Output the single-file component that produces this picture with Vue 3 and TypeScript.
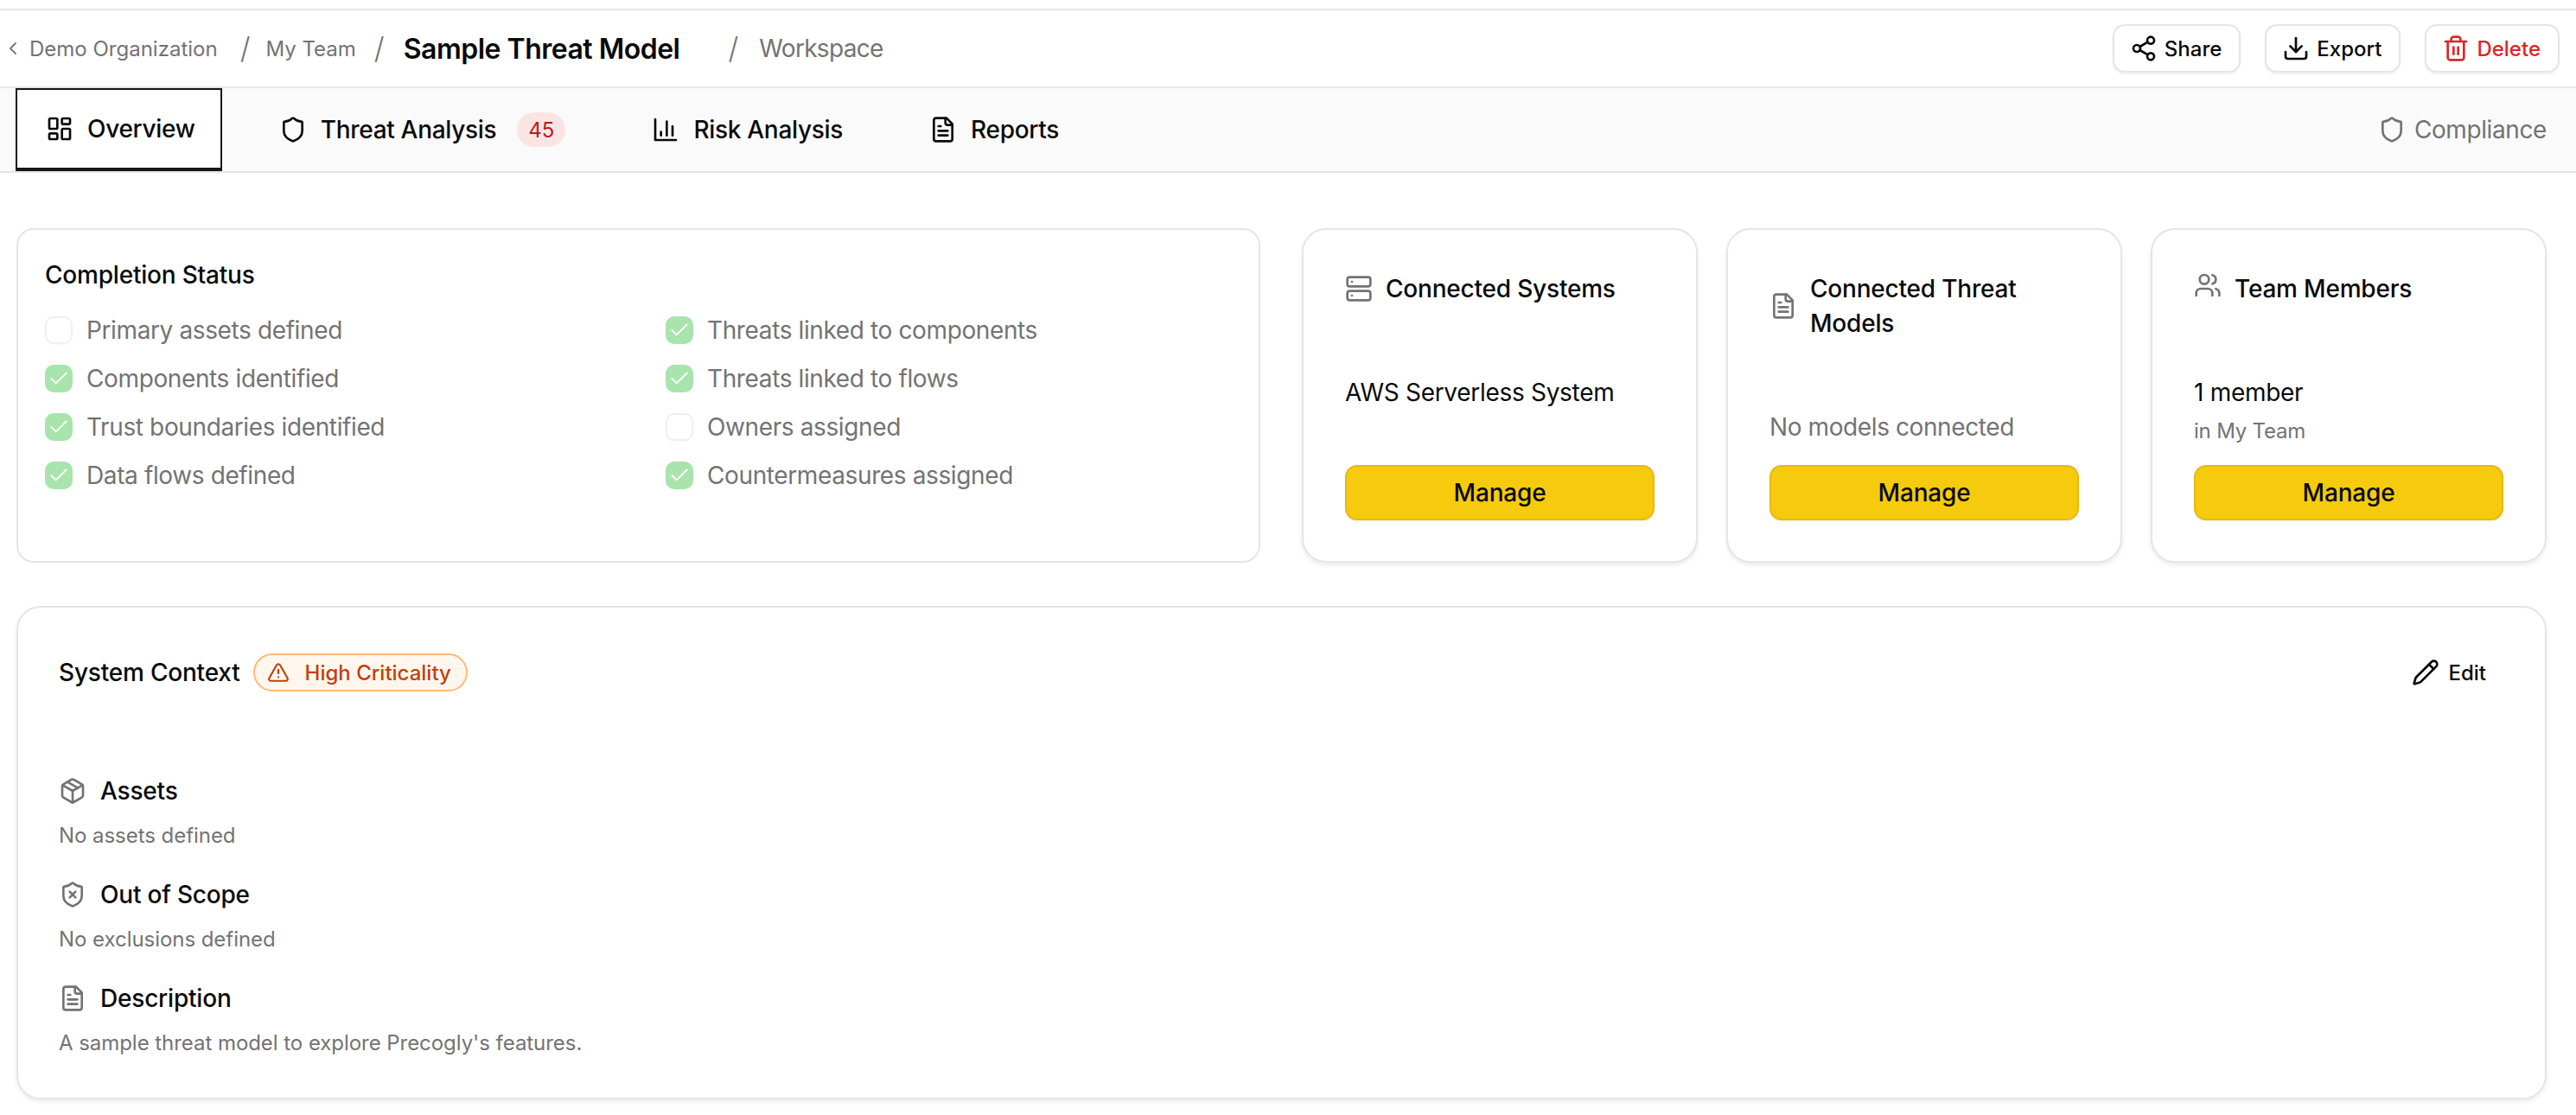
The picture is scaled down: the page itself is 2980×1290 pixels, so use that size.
<script setup lang="ts">
const checks: { label: string; done: boolean }[] = [
  { label: 'Primary assets defined', done: false },
  { label: 'Threats linked to components', done: true },
  { label: 'Components identified', done: true },
  { label: 'Threats linked to flows', done: true },
  { label: 'Trust boundaries identified', done: true },
  { label: 'Owners assigned', done: false },
  { label: 'Data flows defined', done: true },
  { label: 'Countermeasures assigned', done: true },
]
</script>

<template>
  <div class="page">
    <header class="topbar">
      <nav class="crumbs">
        <svg class="chev" viewBox="0 0 24 24"><path d="m15 18-6-6 6-6" /></svg>
        <span class="crumb c-org">Demo Organization</span>
        <span class="slash s1">/</span>
        <span class="crumb c-team">My Team</span>
        <span class="slash s2">/</span>
        <span class="title">Sample Threat Model</span>
        <span class="slash s3">/</span>
        <span class="workspace">Workspace</span>
      </nav>
      <div class="actions">
        <button class="btn">
          <svg class="ic" viewBox="0 0 24 24"><circle cx="18" cy="5" r="3" /><circle cx="6" cy="12" r="3" /><circle cx="18" cy="19" r="3" /><line x1="8.59" y1="13.51" x2="15.42" y2="17.49" /><line x1="15.41" y1="6.51" x2="8.59" y2="10.49" /></svg>
          Share
        </button>
        <button class="btn">
          <svg class="ic" viewBox="0 0 24 24"><path d="M21 15v4a2 2 0 0 1-2 2H5a2 2 0 0 1-2-2v-4" /><polyline points="7 10 12 15 17 10" /><line x1="12" y1="15" x2="12" y2="3" /></svg>
          Export
        </button>
        <button class="btn danger">
          <svg class="ic" viewBox="0 0 24 24"><path d="M3 6h18" /><path d="M19 6v14c0 1-1 2-2 2H7c-1 0-2-1-2-2V6" /><path d="M8 6V4c0-1 1-2 2-2h4c1 0 2 1 2 2v2" /><line x1="10" y1="11" x2="10" y2="17" /><line x1="14" y1="11" x2="14" y2="17" /></svg>
          Delete
        </button>
      </div>
    </header>

    <div class="tabs">
      <a class="tab active">
        <svg class="tic" viewBox="0 0 24 24"><rect width="7" height="9" x="3" y="3" rx="1" /><rect width="7" height="5" x="14" y="3" rx="1" /><rect width="7" height="9" x="14" y="12" rx="1" /><rect width="7" height="5" x="3" y="16" rx="1" /></svg>
        Overview
      </a>
      <a class="tab">
        <svg class="tic" viewBox="0 0 24 24"><path d="M20 13c0 5-3.5 7.5-7.66 8.95a1 1 0 0 1-.67-.01C7.5 20.5 4 18 4 13V6a1 1 0 0 1 1-1c2 0 4.5-1.2 6.24-2.72a1.17 1.17 0 0 1 1.52 0C14.51 3.81 17 5 19 5a1 1 0 0 1 1 1z" /></svg>
        Threat Analysis
        <span class="count">45</span>
      </a>
      <a class="tab">
        <svg class="tic" viewBox="0 0 24 24"><path d="M3 3v18h18" /><path d="M18 17V9" /><path d="M13 17V5" /><path d="M8 17v-3" /></svg>
        Risk Analysis
      </a>
      <a class="tab">
        <svg class="tic" viewBox="0 0 24 24"><path d="M15 2H6a2 2 0 0 0-2 2v16a2 2 0 0 0 2 2h12a2 2 0 0 0 2-2V7Z" /><path d="M14 2v4a2 2 0 0 0 2 2h4" /><path d="M10 9H8" /><path d="M16 13H8" /><path d="M16 17H8" /></svg>
        Reports
      </a>
      <a class="compliance">
        <svg class="tic" viewBox="0 0 24 24"><path d="M20 13c0 5-3.5 7.5-7.66 8.95a1 1 0 0 1-.67-.01C7.5 20.5 4 18 4 13V6a1 1 0 0 1 1-1c2 0 4.5-1.2 6.24-2.72a1.17 1.17 0 0 1 1.52 0C14.51 3.81 17 5 19 5a1 1 0 0 1 1 1z" /></svg>
        Compliance
      </a>
    </div>

    <main class="main">
      <section class="row">
        <div class="status">
          <h2 class="h">Completion Status</h2>
          <ul class="checks">
            <li v-for="c in checks" :key="c.label" class="check">
              <span class="box" :class="{ on: c.done }">
                <svg v-if="c.done" viewBox="0 0 24 24"><path d="M20 6 9 17l-5-5" /></svg>
              </span>
              {{ c.label }}
            </li>
          </ul>
        </div>

        <div class="mini">
          <div class="mini-head">
            <svg class="gic" viewBox="0 0 24 24"><rect width="20" height="8" x="2" y="2" rx="2" /><rect width="20" height="8" x="2" y="14" rx="2" /><line x1="6" y1="6" x2="6.01" y2="6" /><line x1="6" y1="18" x2="6.01" y2="18" /></svg>
            <h3 class="h">Connected Systems</h3>
          </div>
          <div class="mini-body"><p class="strong">AWS Serverless System</p></div>
          <button class="manage">Manage</button>
        </div>

        <div class="mini">
          <div class="mini-head">
            <svg class="gic" viewBox="0 0 24 24"><path d="M15 2H6a2 2 0 0 0-2 2v16a2 2 0 0 0 2 2h12a2 2 0 0 0 2-2V7Z" /><path d="M14 2v4a2 2 0 0 0 2 2h4" /><path d="M10 9H8" /><path d="M16 13H8" /><path d="M16 17H8" /></svg>
            <h3 class="h">Connected Threat Models</h3>
          </div>
          <div class="mini-body"><p class="muted">No models connected</p></div>
          <button class="manage">Manage</button>
        </div>

        <div class="mini">
          <div class="mini-head top">
            <svg class="gic" viewBox="0 0 24 24"><path d="M16 21v-2a4 4 0 0 0-4-4H6a4 4 0 0 0-4 4v2" /><circle cx="9" cy="7" r="4" /><path d="M22 21v-2a4 4 0 0 0-3-3.87" /><path d="M16 3.13a4 4 0 0 1 0 7.75" /></svg>
            <h3 class="h">Team Members</h3>
          </div>
          <div class="mini-body">
            <p class="strong">1 member</p>
            <p class="sub">in My Team</p>
          </div>
          <button class="manage">Manage</button>
        </div>
      </section>

      <section class="context">
        <div class="ctx-head">
          <h2 class="h">System Context</h2>
          <span class="crit">
            <svg viewBox="0 0 24 24"><path d="m21.73 18-8-14a2 2 0 0 0-3.48 0l-8 14A2 2 0 0 0 4 21h16a2 2 0 0 0 1.73-3" /><path d="M12 9v4" /><path d="M12 17h.01" /></svg>
            High Criticality
          </span>
          <button class="edit">
            <svg viewBox="0 0 24 24"><path d="M21.174 6.812a1 1 0 0 0-3.986-3.987L3.842 16.174a2 2 0 0 0-.5.83l-1.321 4.352a.5.5 0 0 0 .623.622l4.353-1.32a2 2 0 0 0 .83-.497z" /><path d="m15 5 4 4" /></svg>
            Edit
          </button>
        </div>

        <div class="block">
          <div class="block-head">
            <svg class="bic" viewBox="0 0 24 24"><path d="M21 8a2 2 0 0 0-1-1.73l-7-4a2 2 0 0 0-2 0l-7 4A2 2 0 0 0 3 8v8a2 2 0 0 0 1 1.73l7 4a2 2 0 0 0 2 0l7-4A2 2 0 0 0 21 16Z" /><path d="m3.3 7 8.7 5 8.7-5" /><path d="M12 22V12" /><path d="m7.5 4.27 9 5.15" /></svg>
            <h3 class="h">Assets</h3>
          </div>
          <p class="desc">No assets defined</p>
        </div>
        <div class="block">
          <div class="block-head">
            <svg class="bic" viewBox="0 0 24 24"><path d="M20 13c0 5-3.5 7.5-7.66 8.95a1 1 0 0 1-.67-.01C7.5 20.5 4 18 4 13V6a1 1 0 0 1 1-1c2 0 4.5-1.2 6.24-2.72a1.17 1.17 0 0 1 1.52 0C14.51 3.81 17 5 19 5a1 1 0 0 1 1 1z" /><path d="m14.5 9.5-5 5" /><path d="m9.5 9.5 5 5" /></svg>
            <h3 class="h">Out of Scope</h3>
          </div>
          <p class="desc">No exclusions defined</p>
        </div>
        <div class="block">
          <div class="block-head">
            <svg class="bic" viewBox="0 0 24 24"><path d="M15 2H6a2 2 0 0 0-2 2v16a2 2 0 0 0 2 2h12a2 2 0 0 0 2-2V7Z" /><path d="M14 2v4a2 2 0 0 0 2 2h4" /><path d="M10 9H8" /><path d="M16 13H8" /><path d="M16 17H8" /></svg>
            <h3 class="h">Description</h3>
          </div>
          <p class="desc">A sample threat model to explore Precogly's features.</p>
        </div>
      </section>
    </main>
  </div>
</template>

<style>
html, body { margin: 0; background: #fff; overflow: hidden; }
</style>

<style scoped>
.page {
  width: 2980px;
  height: 1290px;
  font-family: Inter, "Liberation Sans", sans-serif;
  color: #0a0a0a;
  background: #fff;
  box-sizing: border-box;
  padding-top: 10px;
}
svg { fill: none; stroke: currentColor; stroke-linecap: round; stroke-linejoin: round; stroke-width: 2; flex: none; display: block; }
h2, h3, p, ul { margin: 0; padding: 0; }
button { font-family: inherit; cursor: pointer; }

.topbar {
  height: 88px;
  border-top: 2px solid #e5e5e5;
  border-bottom: 2px solid #e5e5e5;
  display: flex;
  align-items: center;
  justify-content: space-between;
  padding: 0 19px 0 3px;
}
.crumbs { display: flex; align-items: center; color: #737373; }
.chev { width: 24px; height: 24px; stroke-width: 1.8; margin-right: 7px; }
.crumb { font-size: 24px; }
.slash { font-size: 34px; font-weight: 300; line-height: 40px; }
.s1 { margin: 0 18px 0 26px; }
.s2 { margin: 0 22px 0 21px; }
.s3 { margin: 0 24px 0 56px; }
.title { font-size: 32px; font-weight: 600; color: #0a0a0a; letter-spacing: -0.5px; }
.workspace { font-size: 28px; letter-spacing: -0.7px; }

.actions { display: flex; gap: 28px; }
.btn {
  height: 56px;
  padding: 0 20px 0 18px;
  display: flex;
  align-items: center;
  gap: 8px;
  background: #fff;
  border: 2px solid #e5e5e5;
  border-radius: 14px;
  box-shadow: 0 2px 3px rgba(0, 0, 0, .06);
  font-size: 24px;
  font-weight: 500;
  color: #0a0a0a;
}
.btn.danger { color: #dc2626; }
.ic { width: 32px; height: 32px; }

.tabs {
  height: 96px;
  background: #fafafa;
  border-bottom: 2px solid #e5e5e5;
  display: flex;
  align-items: stretch;
  padding: 0 34px 0 18px;
  gap: 31px;
}
.tab {
  display: flex;
  align-items: center;
  gap: 16px;
  padding: 0 32px 0 33px;
  font-size: 28px;
  font-weight: 500;
  letter-spacing: -0.3px;
  color: #0a0a0a;
  box-sizing: border-box;
  border: 2px solid transparent;
}
.tab.active {
  background: #fff;
  border-color: #171717;
  border-bottom-width: 4px;
  padding-right: 29px;
}
.tic { width: 32px; height: 32px; }
.count {
  width: 56px;
  height: 40px;
  margin-left: 8px;
  border-radius: 20px;
  background: #fbe4e4;
  color: #b91c1c;
  font-size: 24px;
  font-weight: 400;
  letter-spacing: 0;
  display: flex;
  align-items: center;
  justify-content: center;
}
.compliance {
  margin-left: auto;
  display: flex;
  align-items: center;
  gap: 10px;
  font-size: 28px;
  letter-spacing: -0.4px;
  color: #737373;
}

.main { padding: 64px 34px 0 19px; }
.row { display: flex; align-items: stretch; height: 387px; }
.h { font-size: 28px; font-weight: 500; line-height: 40px; color: #0a0a0a; letter-spacing: -0.2px; }

.status {
  width: 1439px;
  box-sizing: border-box;
  margin-right: 48px;
  border: 2px solid #e5e5e5;
  border-radius: 20px;
  padding: 32px 31px;
}
.checks {
  list-style: none;
  margin-top: 24px;
  display: grid;
  grid-template-columns: 1fr 1fr;
  column-gap: 63px;
  row-gap: 16px;
}
.check {
  display: flex;
  align-items: center;
  gap: 16px;
  height: 40px;
  font-size: 28px;
  letter-spacing: -0.38px;
  color: #737373;
}
.box {
  width: 32px;
  height: 32px;
  box-sizing: border-box;
  border-radius: 10px;
  border: 2px solid #f0f0f0;
  background: #fff;
  box-shadow: 0 1px 2px rgba(0, 0, 0, .03);
  display: flex;
  align-items: center;
  justify-content: center;
  color: #fff;
}
.box.on { background: #a8e4ab; border-color: #a8e4ab; box-shadow: none; }
.box svg { width: 26px; height: 26px; stroke-width: 1.7; }

.mini {
  width: 458px;
  box-sizing: border-box;
  margin-right: 33px;
  border: 2px solid #e5e5e5;
  border-radius: 28px;
  box-shadow: 0 3px 5px rgba(0, 0, 0, .08);
  padding: 48px 48px 47px;
  display: flex;
  flex-direction: column;
}
.mini:last-child { margin-right: 0; }
.mini-head { display: flex; align-items: center; gap: 15px; }
.mini-head.top { align-items: flex-start; }
.gic { width: 32px; height: 32px; color: #737373; }
.mini-body { margin-top: 80px; }
.strong { font-size: 28px; line-height: 40px; font-weight: 400; letter-spacing: -0.3px; color: #0a0a0a; }
.muted { font-size: 28px; line-height: 40px; letter-spacing: -0.4px; color: #737373; }
.sub { font-size: 24px; line-height: 36px; letter-spacing: -0.2px; color: #737373; margin-top: 7px; }
.manage {
  margin-top: auto;
  height: 64px;
  background: #f6cb0d;
  border: 2px solid #e8b90f;
  border-radius: 14px;
  font-size: 28px;
  font-weight: 500;
  letter-spacing: -0.2px;
  color: #0a0a0a;
  box-shadow: 0 2px 3px rgba(0, 0, 0, .06);
}

.context {
  margin-top: 50px;
  height: 571px;
  box-sizing: border-box;
  border: 2px solid #e5e5e5;
  border-radius: 28px;
  box-shadow: 0 3px 5px rgba(0, 0, 0, .08);
  padding: 53px 47px;
}
.ctx-head { display: flex; align-items: center; gap: 15px; height: 44px; margin-bottom: 95px; }
.crit {
  height: 44px;
  box-sizing: border-box;
  padding: 0 17px 0 14px;
  display: flex;
  align-items: center;
  gap: 18px;
  border: 2px solid #fdba74;
  border-radius: 22px;
  background: #fff7ed;
  color: #c2410c;
  font-size: 24px;
  font-weight: 500;
}
.crit svg { width: 26px; height: 26px; }
.edit {
  margin-left: auto;
  margin-right: 21px;
  display: flex;
  align-items: center;
  gap: 10px;
  border: 0;
  background: none;
  font-size: 24px;
  font-weight: 500;
  color: #0a0a0a;
  padding: 0;
}
.edit svg { width: 32px; height: 32px; }
.block { height: 120px; }
.block-head { display: flex; align-items: center; gap: 16px; }
.bic { width: 32px; height: 32px; color: #737373; }
.desc { margin-top: 14px; font-size: 24px; line-height: 36px; letter-spacing: -0.05px; color: #737373; }
</style>
